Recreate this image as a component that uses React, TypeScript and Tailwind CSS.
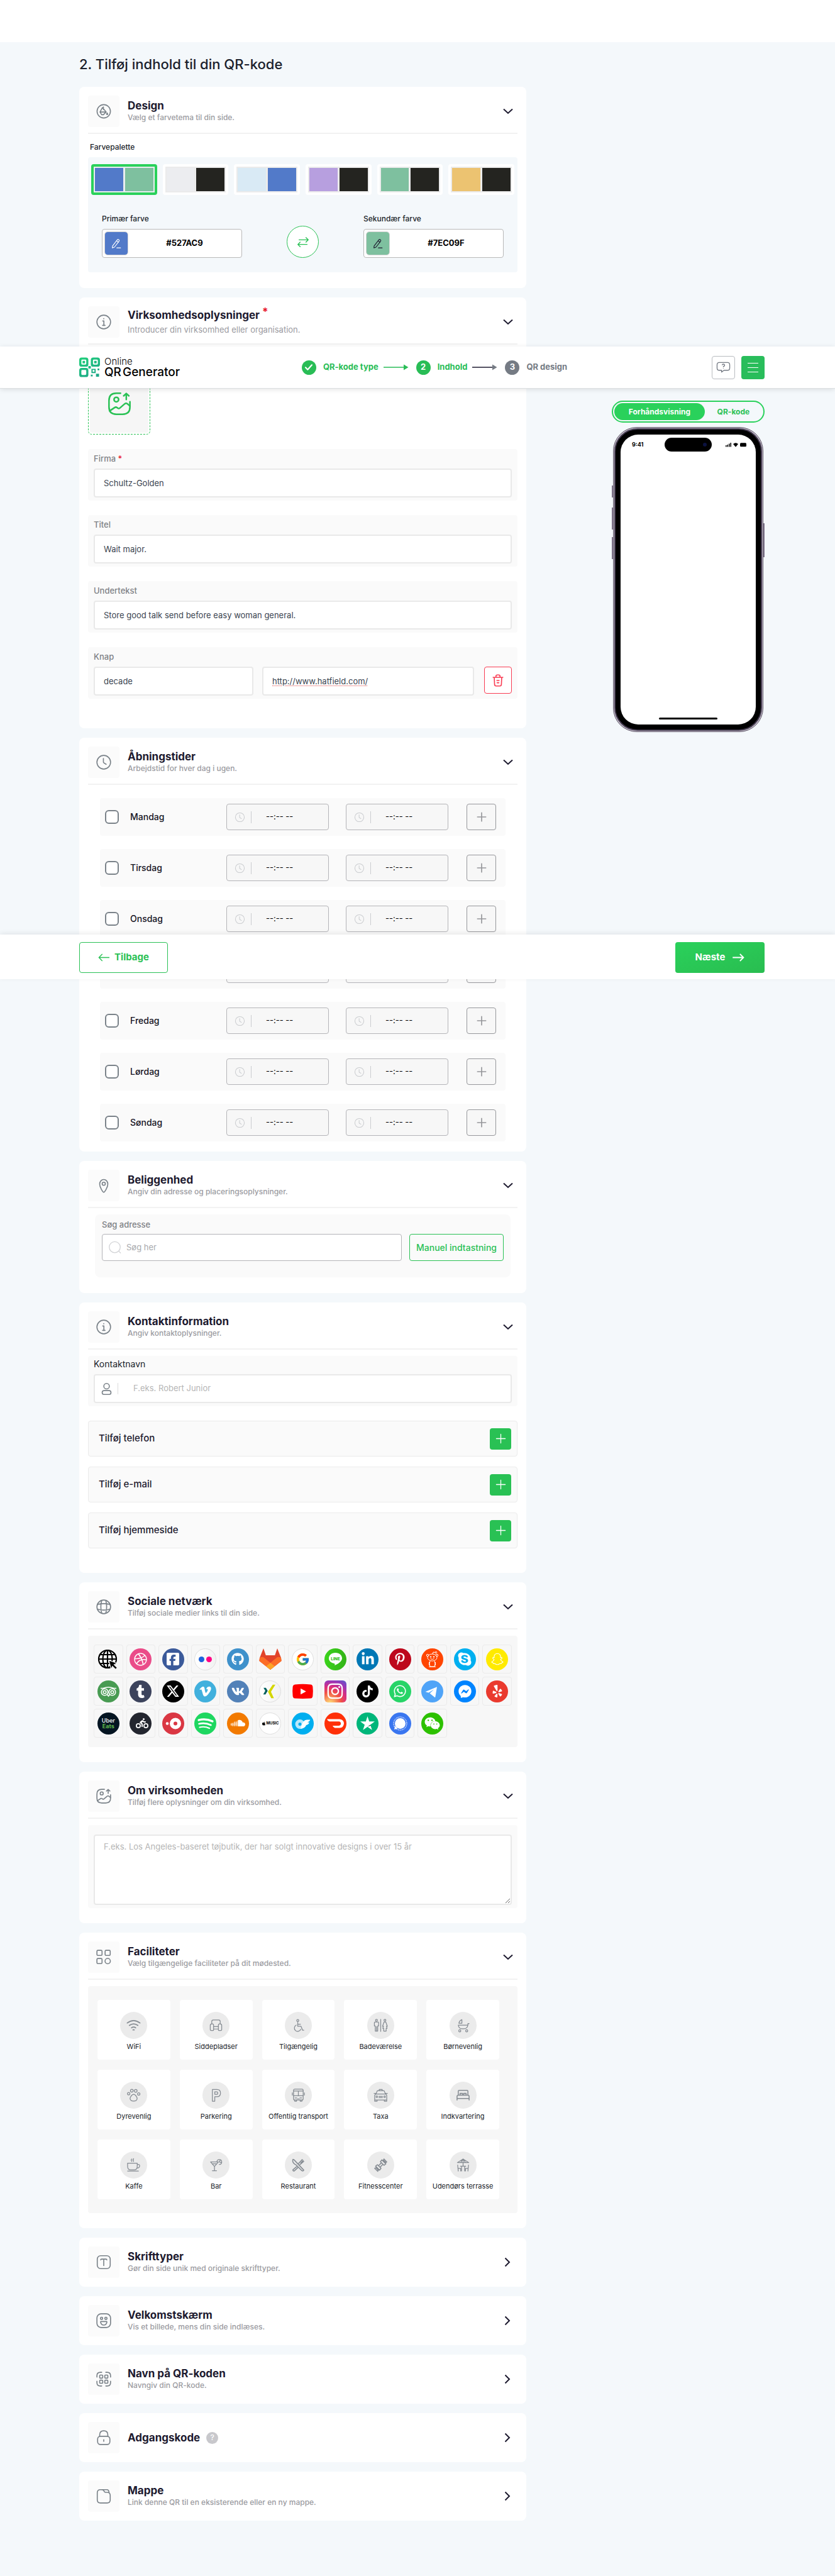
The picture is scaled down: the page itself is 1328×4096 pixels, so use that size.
import React from "react";
import {
  FaApple,
  FaDribbble,
  FaFacebookF,
  FaFacebookMessenger,
  FaGithub,
  FaInstagram,
  FaLinkedinIn,
  FaPersonBiking,
  FaPinterestP,
  FaSkype,
  FaSnapchat,
  FaSoundcloud,
  FaTiktok,
  FaTumblr,
  FaVimeoV,
  FaWeixin,
  FaWhatsapp,
  FaXTwitter,
  FaYelp,
} from "react-icons/fa6";
import { FaVk } from "react-icons/fa";
import { FcGoogle } from "react-icons/fc";

type Kids = { children?: React.ReactNode };

/* ---------- small drawing helpers ---------- */

function Line({ children, className = "h-[26px] w-[26px]", width = 1.5 }: Kids & { className?: string; width?: number }) {
  return (
    <svg
      viewBox="0 0 24 24"
      className={className}
      fill="none"
      stroke="currentColor"
      strokeWidth={width}
      strokeLinecap="round"
      strokeLinejoin="round"
      aria-hidden="true"
    >
      {children}
    </svg>
  );
}

const imageUp = (
  <>
    <path d="M13 2H9Q2 2 2 9v6q0 7 7 7h6q7 0 7-7v-5" />
    <circle cx="9" cy="8" r="2.2" />
    <path d="M18.5 8V2.2M16 4.5l2.5-2.3L21 4.5" />
    <path d="M2.6 18.8l5-3.3q1-.6 2 .1l.8.6q1 .7 1.900-.1l4.700-4q1.300-1.100 2.600 0l2.200 1.900" />
  </>
);

const icons = {
  paint: (
    <>
      <circle cx="12" cy="12" r="9.800" />
      <path d="M10 6.500l5.500 6.500-4 4h-2.500l-2.500-4z M7 13h8.500M11.500 5.500v4" />
      <path d="M17 14.500c-2.500 3 2.500 3 0 0" fill="currentColor" />
    </>
  ),
  info: (
    <>
      <circle cx="12" cy="12" r="10" />
      <path d="M10.500 10.500h1.700v6.500M10.300 17h3.600M12 7v.3" />
    </>
  ),
  clock: (
    <>
      <circle cx="12" cy="12" r="10" />
      <path d="M11.500 6.500v5q0 1 .8 1.500l3.200 2" />
    </>
  ),
  pin: (
    <>
      <path d="M12 22c-1 0-6-7-6-12a6 6.800 0 0 1 12 0c0 5-5 12-6 12z" />
      <circle cx="12" cy="9.500" r="2.300" />
    </>
  ),
  globe: (
    <>
      <circle cx="12" cy="12" r="10" />
      <path d="M9 2.500q-2.500 9.500 0 19M15 2.500q2.500 9.500 0 19M2.500 8.500q9.500-2.500 19 0M2.500 15.500q9.500 2.500 19 0" />
    </>
  ),
  imageUp,
  grid: (
    <>
      <rect x="2" y="2" width="7.500" height="7.500" rx="1.500" />
      <rect x="14" y="2" width="7.500" height="7.500" rx="1.500" />
      <rect x="2" y="14" width="7.500" height="7.500" rx="1.500" />
      <circle cx="17.800" cy="17.800" r="3.900" />
    </>
  ),
  type: (
    <>
      <rect x="2.500" y="2.500" width="19" height="19" rx="5" />
      <path d="M7.500 8.800q0-1.300 1.300-1.300h6.400q1.300 0 1.300 1.300M12 7.500v9.500" />
    </>
  ),
  smile: (
    <>
      <rect x="2" y="2" width="20" height="20" rx="6" />
      <circle cx="8.800" cy="8.500" r="1.600" />
      <circle cx="15.200" cy="8.500" r="1.600" />
      <path d="M8 13.300h8q.6 0 .6.600a4.600 4.600 0 0 1-9.200 0q0-.6.600-.6z" />
    </>
  ),
  qr: (
    <>
      <path d="M2 9V7q0-5 5-5h2M15 2h2q5 0 5 5v2M22 15v2q0 5-5 5h-2M9 22H7q-5 0-5-5v-2" />
      <rect x="6" y="6" width="4.500" height="4.500" rx="1" />
      <rect x="13.500" y="6" width="4.500" height="4.500" rx="1" />
      <rect x="6" y="13.500" width="4.500" height="4.500" rx="1" />
      <rect x="13.500" y="13.500" width="4.500" height="4.500" rx="1" />
    </>
  ),
  lock: (
    <>
      <path d="M6 10V8q0-6 6-6t6 6v2" />
      <rect x="3" y="10" width="18" height="12" rx="4" />
      <path d="M12 15v2.500" />
    </>
  ),
  folder: (
    <>
      <path d="M2.500 17V7q0-4.500 4.500-4.500h2.500q1.500 0 2.200 1l1.300 2q.7 1 2 1h2q4.500 0 4.500 4.500v6.500q0 4.500-4.500 4.500H7q-4.500 0-4.500-4.500z" />
      <path d="M9.500 2.500h7q3 0 3.300 4.300" />
    </>
  ),
};

type IconName = keyof typeof icons;

/* ---------- cards ---------- */

function Card({
  icon,
  title,
  sub,
  required,
  help,
  closed,
  children,
}: Kids & { icon: IconName; title: string; sub?: string; required?: boolean; help?: boolean; closed?: boolean }) {
  return (
    <section className="rounded-lg bg-white px-[14px]">
      <div className={closed ? "flex items-center py-[14px]" : "flex items-center border-b-2 border-[#f2f2f2] pb-[9px] pt-[14px]"}>
        <span className="flex h-[50px] w-[50px] items-center justify-center rounded bg-[#fbfbfb] text-[#7a8289]">
          <Line>{icons[icon]}</Line>
        </span>
        <div className="ml-[13px] flex-1">
          <h2 className="flex items-center text-[17px] font-bold leading-[20px] text-[#1d1a2f]">
            {title}
            {required && <span className="ml-1 self-start text-[17px] leading-[10px] text-[#e8192c]">*</span>}
            {help && (
              <span className="ml-[10px] flex h-[19px] w-[19px] items-center justify-center rounded-full bg-[#c8c8cc] text-xs font-medium text-white">
                ?
              </span>
            )}
          </h2>
          {sub && (
            <p className={required ? "pt-1 text-[13px] font-normal leading-[18px] text-[#9b9ba1]" : "text-xs font-medium leading-[18px] text-[#9b9ba1]"}>
              {sub}
            </p>
          )}
        </div>
        <button type="button" aria-label={title} className={closed ? "mr-[7px] p-1 text-[#1d1a2f]" : "mr-[3px] p-1 text-[#1d1a2f]"}>
          {closed ? (
            <svg viewBox="0 0 10 16" className="h-4 w-[10px]" fill="none" stroke="currentColor" strokeWidth="2">
              <path d="M1.500 1.500L8 8l-6.500 6.500" />
            </svg>
          ) : (
            <svg viewBox="0 0 16 10" className="h-[10px] w-4" fill="none" stroke="currentColor" strokeWidth="2">
              <path d="M1 1.500L8 8l7-6.500" />
            </svg>
          )}
        </button>
      </div>
      {children}
    </section>
  );
}

const inputBox =
  "h-[46px] w-full min-w-0 rounded border-2 border-[#e9e9e9] bg-white px-[14px] text-[13px] text-[#3b4450] outline-none placeholder:text-[#b5b5b5]";
const panel = "rounded bg-[#fafafa] px-[9px]";

/* ---------- design ---------- */

const palettes = [
  ["bg-[#527ac9]", "bg-[#7ec09f]"],
  ["bg-[#ecedf0]", "bg-[#242420]"],
  ["bg-[#d9eaf5]", "bg-[#527ac9]"],
  ["bg-[#b79fdf]", "bg-[#242420]"],
  ["bg-[#7ec09f]", "bg-[#242420]"],
  ["bg-[#ecc371]", "bg-[#242420]"],
];

function ColorField({ id, label, value, tile }: { id: string; label: string; value: string; tile: string }) {
  return (
    <div className="w-[223px]">
      <label htmlFor={id} className="block text-xs font-medium leading-5 text-[#20242a]">
        {label}
      </label>
      <div className="mt-[6px] flex h-[46px] items-center rounded border border-[#b9b9b9] bg-white pl-1">
        <span className={tile}>
          <Line className="h-[18px] w-[18px]" width={1.5}>
            <path d="M4 17.500L14 4.500q1.500-1.800 3.300-.4t.4 3.400L8 20l-4.500 1.500zM12.500 6.500l4 3.200M13 21.500h8" />
          </Line>
        </span>
        <input id={id} defaultValue={value} className="w-full min-w-0 bg-transparent text-center text-[13px] font-bold text-black outline-none" />
      </div>
    </div>
  );
}

function DesignCard() {
  return (
    <Card icon="paint" title="Design" sub="Vælg et farvetema til din side.">
      <p className="mb-[6px] mt-[11px] px-[3px] text-xs font-medium leading-5 text-[#20242a]">Farvepalette</p>
      <div className="mb-[25px] rounded bg-[#f4f8fb] px-[5px] pb-[23px] pt-[11px]">
        <div className="grid grid-cols-6 gap-[9px]">
          {palettes.map(([a, b], i) => (
            <button
              key={i}
              type="button"
              aria-label={"Farvepalette " + (i + 1)}
              className={
                i === 0
                  ? "flex h-[49px] rounded border-[4px] border-[#2ad15b] bg-[#e9edef] p-px"
                  : "flex h-[49px] rounded border-[4px] border-white bg-[#ebebeb] p-px"
              }
            >
              <span className="grid h-full w-full grid-cols-2 gap-[3px] p-px">
                <span className={a} />
                <span className={b} />
              </span>
            </button>
          ))}
        </div>
        <div className="mt-7 flex items-end justify-between px-[17px]">
          <ColorField
            id="primary"
            label="Primær farve"
            value="#527AC9"
            tile="flex h-9 w-9 shrink-0 items-center justify-center rounded-sm bg-[#527ac9] text-white outline outline-1 outline-[#d5d5d5]"
          />
          <button
            type="button"
            aria-label="Byt farver"
            className="flex h-[51px] w-[51px] items-center justify-center rounded-full border border-[#2ac155] bg-white text-[#2ac155]"
          >
            <Line className="h-[22px] w-[22px]">
              <path d="M5 8h16M17 4l4 4-4 4M19 16H3M7 12l-4 4 4 4" />
            </Line>
          </button>
          <ColorField
            id="secondary"
            label="Sekundær farve"
            value="#7EC09F"
            tile="flex h-9 w-9 shrink-0 items-center justify-center rounded-sm bg-[#7ec09f] text-[#1d1a2f] outline outline-1 outline-[#d5d5d5]"
          />
        </div>
      </div>
    </Card>
  );
}

/* ---------- company ---------- */

function Field({ id, label, value, required }: { id: string; label: string; value: string; required?: boolean }) {
  return (
    <div className={panel + " pb-[5px] pt-[5px]"}>
      <label htmlFor={id} className="block text-[13px] font-medium leading-5 text-[#7f8286]">
        {label} {required && <span className="text-[#e8192c]">*</span>}
      </label>
      <input id={id} defaultValue={value} className={"mt-[6px] " + inputBox} />
    </div>
  );
}

function CompanyCard() {
  return (
    <Card icon="info" title="Virksomhedsoplysninger" sub="Introducer din virksomhed eller organisation." required>
      <button
        type="button"
        aria-label="Upload billede"
        className="mb-[23px] mt-11 flex h-[99px] w-[99px] rounded-md border border-dashed border-[#2ac155] p-[2px]"
      >
        <span className="flex h-full w-full items-center justify-center rounded bg-[#f6f6f6] text-[#2ac155]">
          <Line className="h-10 w-10" width={1.5}>
            {imageUp}
          </Line>
        </span>
      </button>
      <div className="flex flex-col gap-[23px] pb-[47px]">
        <Field id="firm" label="Firma" value="Schultz-Golden" required />
        <Field id="titel" label="Titel" value="Wait major." />
        <Field id="under" label="Undertekst" value="Store good talk send before easy woman general." />
        <div className={panel + " pb-[5px] pt-[5px]"}>
          <label htmlFor="knap" className="block text-[13px] font-medium leading-5 text-[#7f8286]">
            Knap
          </label>
          <div className="mt-[6px] flex">
            <div className="w-[254px]">
              <input id="knap" defaultValue="decade" className={inputBox} />
            </div>
            <div className="ml-[14px] mr-4 flex-1">
              <input
                aria-label="Link"
                defaultValue="http://www.hatfield.com/"
                className={inputBox + " underline decoration-[#e04a4a] decoration-dotted decoration-1 underline-offset-2"}
              />
            </div>
            <button
              type="button"
              aria-label="Slet"
              className="flex h-[43px] w-[44px] items-center justify-center rounded border border-[#f93b52] bg-white text-[#f93b52]"
            >
              <Line className="h-[22px] w-[22px]" width={1.800}>
                <path d="M3.500 6.500h17M8.500 6V4.500q0-2 2-2h3q2 0 2 2V6M5.500 6.500l.6 12.500q.2 2.500 2.500 2.500h6.800q2.300 0 2.500-2.500l.6-12.500M10 12h4M10.500 16h3" />
              </Line>
            </button>
          </div>
        </div>
      </div>
    </Card>
  );
}

/* ---------- opening hours ---------- */

const days = ["Mandag", "Tirsdag", "Onsdag", "Torsdag", "Fredag", "Lørdag", "Søndag"];

function TimeBox({ label }: { label: string }) {
  return (
    <div className="flex h-[42px] w-[163px] items-center rounded border border-[#b4b4b8] bg-[#f7f7f7] pl-3 text-[#cbcdd0]">
      <Line className="h-[17px] w-[17px]">{icons.clock}</Line>
      <span className="ml-[9px] h-[19px] w-px bg-[#cbcdd0]" />
      <input
        aria-label={label}
        defaultValue="--:-- --"
        className="ml-[23px] w-20 bg-transparent text-[13px] text-black outline-none"
      />
    </div>
  );
}

function HoursCard() {
  return (
    <Card icon="clock" title="Åbningstider" sub="Arbejdstid for hver dag i ugen.">
      <ul className="mx-[19px] flex flex-col gap-[21px] pb-4 pt-[21px]">
        {days.map((d) => (
          <li key={d} className="flex h-[60px] items-center rounded bg-[#fafafa] pl-2 pr-[15px]">
            <label className="flex flex-1 items-center text-sm font-medium text-[#15131f]">
              <input type="checkbox" className="mr-[18px] h-[22px] w-[22px] appearance-none rounded-md border-2 border-[#7a8289] bg-white" />
              {d}
            </label>
            <TimeBox label={d + " fra"} />
            <span className="w-[27px]" />
            <TimeBox label={d + " til"} />
            <button
              type="button"
              aria-label={"Tilføj tid " + d}
              className="ml-[29px] flex h-[42px] w-[47px] items-center justify-center rounded border border-[#96979b] bg-[#f7f7f7] text-[#96979b]"
            >
              <Line className="h-4 w-4" width={2.500}>
                <path d="M12 2v20M2 12h20" />
              </Line>
            </button>
          </li>
        ))}
      </ul>
    </Card>
  );
}

/* ---------- location and contact ---------- */

function LocationCard() {
  return (
    <Card icon="pin" title="Beliggenhed" sub="Angiv din adresse og placeringsoplysninger.">
      <div className="mx-[11px] mb-[25px] mt-[10px] rounded-lg bg-[#fafafa] px-[11px] pb-[26px] pt-[6px]">
        <label htmlFor="addr" className="block text-[13px] font-medium leading-5 text-[#7f8286]">
          Søg adresse
        </label>
        <div className="mt-[5px] flex gap-3">
          <div className="flex h-[43px] flex-1 items-center rounded border border-[#b4b4b8] bg-white pl-[9px] text-[#d2d3d6]">
            <Line className="h-[21px] w-[21px] shrink-0">
              <circle cx="12" cy="11.500" r="10" />
              <path d="M19.500 19l3 3" />
            </Line>
            <input id="addr" placeholder="Søg her" className="ml-2 w-full min-w-0 bg-transparent text-[13px] outline-none placeholder:text-[#a8a9ad]" />
          </div>
          <button type="button" className="h-[43px] w-[150px] whitespace-nowrap rounded border border-[#2ac155] text-sm font-medium text-[#2ac155]">
            Manuel indtastning
          </button>
        </div>
      </div>
    </Card>
  );
}

function ContactCard() {
  return (
    <Card icon="info" title="Kontaktinformation" sub="Angiv kontaktoplysninger.">
      <div className={panel + " mt-[10px] pb-[5px] pt-[3px]"}>
        <label htmlFor="contact" className="block text-sm leading-5 text-[#20242a]">
          Kontaktnavn
        </label>
        <div className="mt-[6px] flex h-[46px] items-center rounded border-2 border-[#e9e9e9] bg-white pl-2 text-[#7a8289]">
          <Line className="h-[21px] w-[21px] shrink-0" width={1.800}>
            <ellipse cx="12" cy="7" rx="5" ry="5" />
            <rect x="4" y="15" width="16" height="7" rx="3.500" />
          </Line>
          <span className="ml-[7px] h-[18px] w-px shrink-0 bg-[#dcdcdc]" />
          <input id="contact" placeholder="F.eks. Robert Junior" className="ml-6 w-full min-w-0 bg-transparent text-[13px] outline-none placeholder:text-[#b5b5b5]" />
        </div>
      </div>
      <div className="mt-[23px] flex flex-col gap-4 pb-[39px]">
        {["Tilføj telefon", "Tilføj e-mail", "Tilføj hjemmeside"].map((t) => (
          <div
            key={t}
            className="flex h-[57px] items-center justify-between rounded-sm border border-[#ebebeb] bg-[#fafafa] pl-4 pr-[9px] text-[15px] font-medium text-[#1d1a2f]"
          >
            {t}
            <button type="button" aria-label={t} className="flex h-[34px] w-[34px] items-center justify-center rounded-sm bg-[#29c154] text-white">
              <Line className="h-[17px] w-[17px]" width={1.800}>
                <path d="M12 2v20M2 12h20" />
              </Line>
            </button>
          </div>
        ))}
      </div>
    </Card>
  );
}

/* ---------- social ---------- */

function Disc({ bg, children }: Kids & { bg: string }) {
  return <span className={"flex h-[35px] w-[35px] items-center justify-center overflow-hidden rounded-full text-white " + bg}>{children}</span>;
}

const ring = "border border-[#dedede] bg-gradient-to-r from-white to-[#f2f2f2]";

const socials: [string, React.ReactNode][] = [
  [
    "Web",
    <svg viewBox="0 0 36 36" className="h-9 w-9">
      <g fill="none" stroke="#000" strokeWidth="2.200">
        <circle cx="17" cy="18" r="14" />
        <ellipse cx="17" cy="18" rx="7.500" ry="14" />
        <path d="M17 4v28M3 18h28M5 11h24M5 25h24" />
      </g>
      <path d="M19 20l13 4.500-4.500 2.300 5 5-2.700 2.700-5-5-2 5z" stroke="#f7f7f7" strokeWidth="1.200" />
    </svg>,
  ],
  ["Dribbble", <Disc bg="bg-[#ea4c89]"><FaDribbble size={21} /></Disc>],
  [
    "Facebook",
    <Disc bg="bg-[#3b5a9a]">
      <span className="flex h-5 w-5 items-end justify-end rounded-[2px] bg-white pr-[2px] text-[#3b5a9a]">
        <FaFacebookF size={17} />
      </span>
    </Disc>,
  ],
  [
    "Flickr",
    <Disc bg={ring}>
      <span className="mr-[3px] h-[9px] w-[9px] rounded-full bg-[#1c63dc]" />
      <span className="h-[9px] w-[9px] rounded-full bg-[#ff0084]" />
    </Disc>,
  ],
  ["GitHub", <Disc bg="bg-[#3f91cb]"><FaGithub size={20} /></Disc>],
  [
    "GitLab",
    <svg viewBox="0 0 36 36" className="h-9 w-9">
      <path d="M7 1L1 16l-.6 5L18 35 35.600 21l-.6-5L29 1l-3.800 11H10.800z" fill="#e24329" />
      <path d="M1 16q3-2 6-1l11 9 11-9q3-1 6 1l.6 5L18 35 .4 21z" fill="#fc6d26" />
      <path d="M18 24l7 5.500L18 35l-7-5.500z" fill="#fca326" />
    </svg>,
  ],
  ["Google", <Disc bg="border border-[#dedede] bg-white"><FcGoogle size={23} /></Disc>],
  [
    "LINE",
    <Disc bg="bg-gradient-to-r from-[#3bd41c] to-[#33b317]">
      <svg viewBox="0 0 35 35" className="h-full w-full">
        <path d="M17.500 7C11 7 7 11 7 16c0 4 3.500 7 8.500 8 1.500.3 1 1.500.8 3 4-1.600 11.700-6 11.700-11 0-5-4-9-10.500-9z" fill="#fff" />
        <text x="17.500" y="18.500" textAnchor="middle" fontSize="6.500" fontWeight="800" fill="#35be19">LINE</text>
      </svg>
    </Disc>,
  ],
  ["LinkedIn", <Disc bg="bg-[#0077b5]"><FaLinkedinIn size={22} /></Disc>],
  ["Pinterest", <Disc bg="bg-[#bd081c]"><FaPinterestP size={20} /></Disc>],
  [
    "Reddit",
    <Disc bg="bg-[#ff4500]">
      <svg viewBox="0 0 35 35" className="h-full w-full" fill="none" stroke="#fff">
        <ellipse cx="17.500" cy="14.500" rx="7.500" ry="5.500" />
        <circle cx="10" cy="11" r="1.700" />
        <circle cx="25" cy="11" r="1.700" />
        <circle cx="23.500" cy="6.500" r="1.300" />
        <path d="M18 9l1-3 3.500.5M14.500 16.500q3 2 6 0M14 20q-2 5 0 9h7q2-4 0-9M12.500 22v5M22.500 22v5M12 29.300h11" />
        <circle cx="15" cy="13.500" r=".8" fill="#fff" />
        <circle cx="20" cy="13.500" r=".8" fill="#fff" />
      </svg>
    </Disc>,
  ],
  ["Skype", <Disc bg="bg-[#00aff0]"><FaSkype size={24} /></Disc>],
  ["Snapchat", <Disc bg="bg-[#ffea00]"><FaSnapchat size={20} /></Disc>],
  [
    "Tripadvisor",
    <Disc bg="bg-[#489b52]">
      <svg viewBox="0 0 35 35" className="h-full w-full" fill="none" stroke="#fff" strokeWidth="1.600">
        <circle cx="11.500" cy="18.500" r="5.300" />
        <circle cx="23.500" cy="18.500" r="5.300" />
        <circle cx="11.500" cy="18.500" r="2.300" />
        <circle cx="23.500" cy="18.500" r="2.300" />
        <path d="M5 12.500h4q8.500-3.500 17 0h4M15.500 22.500l2 2.500 2-2.500" />
      </svg>
    </Disc>,
  ],
  ["Tumblr", <Disc bg="bg-[#3c435c]"><FaTumblr size={21} /></Disc>],
  ["X", <Disc bg="bg-black"><FaXTwitter size={22} /></Disc>],
  ["Vimeo", <Disc bg="bg-[#41b0dd]"><FaVimeoV size={21} /></Disc>],
  ["VK", <Disc bg="bg-[#5281b8]"><FaVk size={21} /></Disc>],
  [
    "Xing",
    <Disc bg={ring}>
      <svg viewBox="0 0 35 35" className="h-full w-full">
        <path d="M6.500 11.500h4l3 5-3.700 6H6l3.500-6z" fill="#00605e" />
        <path d="M22 6h4.500l-7.500 12 5 11h-4.500L14 18z" fill="#d4d600" />
      </svg>
    </Disc>,
  ],
  [
    "YouTube",
    <svg viewBox="0 0 36 26" className="h-[25px] w-[35px]">
      <path d="M5 1.500Q18 0 31 1.500q3 .3 3.500 3.500 1 8 0 16-.5 3-3.500 3.500-13 1-26 0Q2 24 1.500 21q-1-8 0-16Q2 2 5 1.500z" fill="#f00" />
      <path d="M14.500 8v10l9-5z" fill="#fff" />
    </svg>,
  ],
  [
    "Instagram",
    <span className="flex h-[35px] w-[35px] items-center justify-center rounded-md bg-[radial-gradient(circle_at_25%_105%,#fed373_5%,#f15245_40%,#d92e7f_60%,#9b36b7_78%,#515ecf_100%)] text-white">
      <FaInstagram size={28} />
    </span>,
  ],
  ["TikTok", <Disc bg="bg-black"><FaTiktok size={19} /></Disc>],
  ["WhatsApp", <Disc bg="bg-[#27d467]"><FaWhatsapp size={22} /></Disc>],
  [
    "Telegram",
    <Disc bg="bg-[#50a4f8]">
      <svg viewBox="0 0 35 35" className="h-full w-full" fill="#fff">
        <path d="M6.500 18L25 10.200l-2.700 16.300q-.3.800-1 .3L13.500 20.500l6.800-6.200-8.600 5.300z" />
      </svg>
    </Disc>,
  ],
  ["Messenger", <Disc bg="bg-[#0084ff]"><FaFacebookMessenger size={21} /></Disc>],
  ["Yelp", <Disc bg="bg-[#ea3a2e]"><FaYelp size={20} /></Disc>],
  [
    "Uber Eats",
    <Disc bg="flex-col bg-[#051522] text-[9px] leading-[9px]">
      <span className="font-medium">Uber</span>
      <span className="font-bold text-[#5fb94b]">Eats</span>
    </Disc>,
  ],
  [
    "Postmates",
    <Disc bg="bg-[#23262f] pl-1">
      <FaPersonBiking size={20} />
    </Disc>,
  ],
  [
    "OpenTable",
    <Disc bg="bg-[#da3743]">
      <svg viewBox="0 0 35 35" className="h-full w-full" fill="#fff">
        <circle cx="8" cy="17.500" r="2.300" />
        <path fillRule="evenodd" d="M21 8.500a9 9 0 1 0 0 18 9 9 0 0 0 0-18zm0 6a3 3 0 1 1 0 6 3 3 0 0 1 0-6z" />
      </svg>
    </Disc>,
  ],
  [
    "Spotify",
    <Disc bg="bg-[#1ed760]">
      <svg viewBox="0 0 35 35" className="h-full w-full" fill="none" stroke="#fff" strokeLinecap="round">
        <path d="M7 12q11-3.200 22 2" strokeWidth="3.200" />
        <path d="M7.500 18q10-2.500 19 2" strokeWidth="2.600" />
        <path d="M8.500 23.500q8-2 15.500 1.500" strokeWidth="2.200" />
      </svg>
    </Disc>,
  ],
  ["SoundCloud", <Disc bg="bg-[#f27a00]"><FaSoundcloud size={23} /></Disc>],
  [
    "Apple Music",
    <Disc bg="border border-[#dedede] bg-white">
      <span className="flex items-center text-[6px] font-bold leading-none text-black">
        <FaApple size={7} />
        MUSIC
      </span>
    </Disc>,
  ],
  [
    "OnlyFans",
    <Disc bg="bg-[#00aeef]">
      <svg viewBox="0 0 35 35" className="h-full w-full">
        <path fillRule="evenodd" d="M13 11a7.500 7.500 0 1 0 0 15 7.500 7.500 0 0 0 0-15zm0 5a2.500 2.500 0 1 1 0 5 2.500 2.500 0 0 1 0-5z" fill="#b8e7fb" />
        <path d="M14 26q2-8 4.500-11.500T25 11.500h4.500q-1 3-4.500 4l3 .5q-1.500 3.500-5 4-1.500 5-9 6z" fill="#fff" />
      </svg>
    </Disc>,
  ],
  [
    "DoorDash",
    <Disc bg="bg-[#ff3008]">
      <svg viewBox="0 0 35 35" className="h-full w-full" fill="#fff">
        <path d="M4 10.500h20q6.500.5 7 7-.5 6.500-7 7h-7.500q-2.500-1-3.500-3.500h10q3-.5 3.200-3.500-.2-2.800-3.200-3.200H8q-3-1-4-3.800z" />
      </svg>
    </Disc>,
  ],
  [
    "Trustpilot",
    <Disc bg="bg-[#00b67a]">
      <svg viewBox="0 0 35 35" className="h-full w-full">
        <path d="M17.500 6l2.700 8.300H29l-7 5.200 2.700 8.300-7.200-5.100-7.200 5.100 2.700-8.300-7-5.200h8.800z" fill="#fff" />
        <path d="M17.500 22.500l5-1.500-.5-1.500z" fill="#005128" />
      </svg>
    </Disc>,
  ],
  [
    "Signal",
    <Disc bg="bg-[#3a76f0]">
      <svg viewBox="0 0 35 35" className="h-full w-full">
        <circle cx="17.500" cy="17.500" r="8.500" fill="#fff" />
        <path d="M8 27l1.300-5.500 4 4z" fill="#fff" />
        <circle cx="17.500" cy="17.500" r="10.500" fill="none" stroke="#fff" strokeDasharray="2.200 .8" />
      </svg>
    </Disc>,
  ],
  ["WeChat", <Disc bg="bg-[#2dc100]"><FaWeixin size={25} /></Disc>],
];

function SocialCard() {
  return (
    <Card icon="globe" title="Sociale netværk" sub="Tilføj sociale medier links til din side.">
      <div className="pb-6 pt-[10px]">
        <div className="grid grid-cols-[repeat(13,minmax(0,1fr))] gap-[5px] rounded bg-[#f7f7f7] px-[9px] pb-[15px] pt-[14px]">
          {socials.map(([name, mark]) => (
            <button
              key={name}
              type="button"
              aria-label={name}
              className="flex h-[46px] items-center justify-center rounded border border-[#ebebeb]"
            >
              {mark}
            </button>
          ))}
        </div>
      </div>
    </Card>
  );
}

/* ---------- about ---------- */

function AboutCard() {
  return (
    <Card icon="imageUp" title="Om virksomheden" sub="Tilføj flere oplysninger om din virksomhed.">
      <div className="pb-6 pt-[10px]">
        <div className={panel + " pb-[5px] pt-[15px]"}>
          <textarea
            aria-label="Om virksomheden"
            placeholder="F.eks. Los Angeles-baseret tøjbutik, der har solgt innovative designs i over 15 år"
            className="block h-[112px] w-full resize rounded border-2 border-[#e9e9e9] bg-white px-[14px] py-[7px] text-[13px] leading-5 outline-none placeholder:text-[#b5b5b5]"
          />
        </div>
      </div>
    </Card>
  );
}

/* ---------- facilities ---------- */

const facilities: [string, React.ReactNode][] = [
  ["WiFi", <path d="M1.500 8q10.500-8 21 0M5 12q7-5 14 0M8.500 16q3.500-2.500 7 0M11 19.500q1-.7 2 0" strokeWidth="1.800" />],
  [
    "Siddepladser",
    <path d="M5 9V5.500Q5 3 7.500 3h9Q19 3 19 5.500V9M8 14v-2.500Q8 9.500 6 9.500H5q-2.500 0-2.500 2.500v7q0 1.500 1.500 1.500h3q1 0 1-1V14h8v5.500q0 1 1 1h3q1.500 0 1.500-1.500v-7q0-2.500-2.500-2.500h-1q-2 0-2 2V14M8 18h8" />,
  ],
  [
    "Tilgængelig",
    <>
      <circle cx="11" cy="4" r="1.700" />
      <path d="M11 7v6.500h5.500l2.500 6.500h2M11 10h4.500M8.500 11.500A5.500 5.500 0 1 0 16 18.500" />
    </>,
  ],
  [
    "Badeværelse",
    <>
      <path d="M12 2v20" />
      <circle cx="5" cy="3.500" r="1.600" />
      <circle cx="19" cy="3.500" r="1.600" />
      <path d="M2.500 6.500h5q1 0 1 1V13H7v8.500H3V13H1.500V7.500q0-1 1-1zM5 14v7.500M17.500 6.500h3l2.500 7h-1.500l1 3.500h-1.500v4.500h-4V17h-1.500l1-3.500H15z" />
    </>,
  ],
  [
    "Børnevenlig",
    <>
      <path d="M5 8.500h5V2.500Q6 4 5 8.500zM4 11.500h16q-1 6-6.500 6H10q-5 0-6-6zM20 11.500V9h2" />
      <circle cx="6.500" cy="21" r="1.700" />
      <circle cx="18" cy="21" r="1.700" />
    </>,
  ],
  [
    "Dyrevenlig",
    <>
      <circle cx="3.800" cy="9.500" r="2" />
      <circle cx="9" cy="4.500" r="2.300" />
      <circle cx="15.500" cy="4.800" r="2.300" />
      <circle cx="20.500" cy="10" r="2" />
      <path d="M12 10.500q2.500 0 4.500 3.500 3 4-.5 7-4 1.500-8 0-3.500-3-.5-7 2-3.500 4.500-3.500z" />
    </>,
  ],
  ["Parkering", <path d="M6 2.500h7.500q6 0 6 6t-6 6H10V22H6zM10 6.500v4h3q2 0 2-2t-2-2z" />],
  [
    "Offentlig transport",
    <>
      <rect x="4" y="2" width="16" height="18" rx="2" />
      <path d="M4 5h16M4 13h16M12 5v8M2 8v4M22 8v4M6 20v2h3v-2M15 20v2h3v-2M6.500 16.500h3M14.500 16.500h3M10.500 18h3" />
    </>,
  ],
  [
    "Taxa",
    <>
      <path d="M4 10l2.500-5.500h11L20 10M9.500 4.500V2.500h5v2M2 20V13q0-3 3-3h14q3 0 3 3v7zM2 20v2h4v-2M18 20v2h4v-2M1 9h3M20 9h3M9 16h6M9 14h6" />
      <circle cx="5.500" cy="14.500" r="1.300" />
      <circle cx="18.500" cy="14.500" r="1.300" />
    </>,
  ],
  [
    "Indkvartering",
    <path d="M4 12V5.500Q4 4 5.500 4h13Q20 4 20 5.500V12M2 20v-6q0-2 2-2h16q2 0 2 2v6M2 17.500h20M7 12V9h4v3M13 12V9h4v3" strokeWidth="1.600" />,
  ],
  [
    "Kaffe",
    <path d="M2 9h16v5q0 6-5 6H7q-5 0-5-6zM18 11h2.500q1.500 0 1.500 2 0 4-4.500 4M2 22h18M9 2q-2 1.500 0 4M12 1.500q-2 2 0 4.500" />,
  ],
  [
    "Bar",
    <path d="M3 7h13l-6.500 7.500zM9.500 14.500V21M6 21.500h7M6.500 10h6M13.500 7q0-4 4-4t4 4-4 4M17.500 7l1.500-3M17.500 7l3 1" />,
  ],
  [
    "Restaurant",
    <path d="M3 2.500q-1.500 5 3 8l3 2 9 9q2 1 3-1L5 3.500q-1-1-2-1zM14 12l7-6M12 10l6.500-7M16 9l4-4.500M10 14l-7 6q0 2 2 2l7-6.500" strokeWidth="1.600" />,
  ],
  [
    "Fitnesscenter",
    <path d="M9 12.500l3.500-3.500M11.500 15l3.500-3.500M3.500 14l3-2.500 6 6-2.500 3zM2 17.500l2-1 4 4-1 2zM14 3.500l-2.500 3 6 6 3-2.500zM17.500 2l-1 2 4 4 1.500-1z" strokeWidth="1.600" />,
  ],
  [
    "Udendørs terrasse",
    <path d="M12 2L2.500 8h19zM12 2v12M8 8l4-6 4 6M7.500 14h9M9.500 14v8M14.500 14v8M3 12l1 10M21 12l-1 10M4 17.500h4V22M20 17.500h-4V22" />,
  ],
];

function FacilitiesCard() {
  return (
    <Card icon="grid" title="Faciliteter" sub="Vælg tilgængelige faciliteter på dit mødested.">
      <div className="pb-6 pt-[10px]">
        <div className="grid grid-cols-5 gap-x-[15px] gap-y-4 rounded bg-[#f7f7f7] py-[22px] pl-[15px] pr-[29px]">
          {facilities.map(([name, mark]) => (
            <button key={name} type="button" className="flex h-[95px] flex-col items-center rounded-sm bg-white pt-[19px]">
              <span className="flex h-[43px] w-[43px] items-center justify-center rounded-full bg-[#ebebeb] text-[#858b92]">
                <Line className="h-[23px] w-[23px]" width={1.300}>
                  {mark}
                </Line>
              </span>
              <span className="mt-1 whitespace-nowrap text-[11px] leading-4 text-[#20242a]">{name}</span>
            </button>
          ))}
        </div>
      </div>
    </Card>
  );
}

/* ---------- preview ---------- */

function Phone() {
  return (
    <div className="relative mt-[7px] h-[485px] w-full px-[2px]">
      <span className="absolute left-0 top-[93px] h-[19px] w-1 bg-[#83788e]" />
      <span className="absolute left-0 top-[128px] h-[35px] w-1 bg-[#83788e]" />
      <span className="absolute left-0 top-[175px] h-[35px] w-1 bg-[#83788e]" />
      <span className="absolute right-0 top-[153px] h-[54px] w-1 bg-[#83788e]" />
      <div className="relative h-full rounded-[38px] border border-[#5b5364] bg-[#c9c2cf] p-px">
        <div className="h-full rounded-[37px] border-2 border-[#453c50] bg-black p-2">
          <div className="flex h-full flex-col items-center justify-between rounded-[28px] bg-white pb-[8px] pt-[5px]">
            <div className="grid w-full grid-cols-3 items-center px-[14px] text-[9px] font-bold text-black">
              <span className="pl-1">9:41</span>
              <span className="flex h-[22px] w-[75px] items-center justify-end justify-self-center rounded-full bg-black pr-[8px]">
                <span className="h-[6px] w-[6px] rounded-full bg-[#0b1240]" />
              </span>
              <svg viewBox="0 0 34 8" className="h-2 w-[34px] justify-self-end" fill="#000">
                <rect x="0" y="5" width="1.500" height="2.500" />
                <rect x="2.500" y="4" width="1.500" height="3.500" />
                <rect x="5" y="2.500" width="1.500" height="5" />
                <rect x="7.500" y="1" width="1.500" height="6.500" />
                <path d="M12 3q4-3.500 8 0l-4 4.700z" />
                <rect x="23" y="1.200" width="10" height="6" rx="1.500" />
              </svg>
            </div>
            <span className="h-[3px] w-[93px] rounded-full bg-black" />
          </div>
        </div>
      </div>
    </div>
  );
}

/* ---------- bars ---------- */

function Step({ n, label, done, active }: { n: number; label: string; done?: boolean; active?: boolean }) {
  return (
    <li className="flex items-center">
      <span
        className={
          active
            ? "flex h-[23px] w-[23px] items-center justify-center rounded-full bg-[#29bd56] text-[13px] font-bold text-white"
            : "flex h-[23px] w-[23px] items-center justify-center rounded-full bg-[#757b84] text-[13px] font-bold text-white"
        }
      >
        {done ? (
          <Line className="h-4 w-4" width={3.200}>
            <path d="M4.500 12.500l5 5 10-11" />
          </Line>
        ) : (
          n
        )}
      </span>
      <span
        className={
          active
            ? "ml-[11px] whitespace-nowrap text-[13px] font-bold text-[#29bd56]"
            : "ml-[11px] whitespace-nowrap text-[13px] font-bold text-[#757b84]"
        }
      >
        {label}
      </span>
    </li>
  );
}

function Arrow({ stroke, head }: { stroke: string; head: string }) {
  return (
    <li className="pl-2 pr-3" aria-hidden="true">
      <svg viewBox="0 0 40 12" className="h-3 w-10">
        <path d="M0 6h33" stroke={stroke} strokeWidth="1.500" />
        <path d="M32 1.500L39.500 6 32 10.500z" fill={head} />
      </svg>
    </li>
  );
}

function TopBar() {
  return (
    <header className="absolute inset-x-0 top-[551px] flex h-[66px] items-center justify-between bg-white pl-[126px] pr-[112px] shadow-[0_1px_0_#dcdfe1,0_2px_8px_rgba(0,0,0,0.12)]">
      <a href="#" className="flex items-center gap-[7px] text-black">
        <svg viewBox="0 0 34 32" className="h-8 w-[33px]" aria-hidden="true">
          <defs>
            <linearGradient id="g" x1="0" y1="0" x2="0.600" y2="1">
              <stop offset="0" stopColor="#1fd07a" />
              <stop offset="1" stopColor="#1da887" />
            </linearGradient>
          </defs>
          <path
            fill="url(#g)"
            fillRule="evenodd"
            d="M4 0h7q4 0 4 4v7q0 4-4 4H4q-4 0-4-4V4q0-4 4-4zM5 3.500Q3.500 3.500 3.500 5v5Q3.500 11.500 5 11.500h5q1.500 0 1.500-1.500V5q0-1.500-1.500-1.500zM23 0h7q4 0 4 4v7q0 4-4 4h-7q-4 0-4-4V4q0-4 4-4zM24 3.500q-1.500 0-1.500 1.500v5q0 1.500 1.500 1.500h5q1.500 0 1.500-1.500V5q0-1.500-1.500-1.500zM4 17h7q4 0 4 4v7q0 4-4 4H4q-4 0-4-4v-7q0-4 4-4zM5 20.500q-1.500 0-1.500 1.500v5q0 1.500 1.500 1.500h5q1.500 0 1.500-1.500v-5q0-1.500-1.500-1.500zM5.500 5.500h4v4h-4zM24.500 5.500h4v4h-4zM15 14h4v4h-4zM20 18.500h7v7h-7zM22 20.500v3h3v-3zM30 18h3v3h-3zM27.500 26.500h5v5h-5zM19 28h3v3h-3z"
          />
        </svg>
        <span className="flex flex-col">
          <span className="text-[15px] font-light leading-[14px]">Online</span>
          <span className="flex gap-[2px] text-[19px] font-medium leading-[19px]">
            <span>QR</span>
            <span>Generator</span>
          </span>
        </span>
      </a>
      <ol className="mr-9 flex items-center">
        <Step n={1} label="QR-kode type" done active />
        <Arrow stroke="#29bd56" head="#29bd56" />
        <Step n={2} label="Indhold" active />
        <Arrow stroke="#1d1a2f" head="#757b84" />
        <Step n={3} label="QR design" />
      </ol>
      <div className="flex gap-[10px]">
        <button type="button" aria-label="Hjælp" className="flex h-[37px] w-[37px] items-center justify-center rounded border border-[#b9bcc0] text-[#757b84]">
          <svg viewBox="0 0 24 20" className="h-5 w-[23px]" fill="none" stroke="currentColor" strokeWidth="1.400" strokeLinejoin="round">
            <path d="M5 2h14q3.500 0 3.500 4v5q0 4-3.500 4h-6l-4 3v-3H5q-3.500 0-3.500-4V6Q1.500 2 5 2z" />
            <path d="M10 6.500q.2-1.700 2-1.700t2 1.700-2 2.200v1M12 11.300v.8" />
          </svg>
        </button>
        <button type="button" aria-label="Menu" className="flex h-[37px] w-[37px] flex-col items-center justify-center gap-[6px] rounded bg-[#29bd5b]">
          <span className="h-px w-[17px] bg-white" />
          <span className="h-px w-[17px] bg-white" />
          <span className="h-px w-[17px] bg-white" />
        </button>
      </div>
    </header>
  );
}

function BottomBar() {
  return (
    <div className="absolute inset-x-0 top-[1486px] flex h-[71px] items-start justify-between bg-white pl-[126px] pr-[112px] pt-3 shadow-[0_-2px_8px_rgba(0,0,0,0.08)]">
      <button type="button" className="flex h-[49px] w-[141px] items-center justify-center gap-2 rounded-sm border border-[#2ac155] text-[15px] font-bold text-[#2ac155]">
        <svg viewBox="0 0 20 14" className="h-[13px] w-[18px]" fill="none" stroke="currentColor" strokeWidth="1.500">
          <path d="M20 7H1.500M7.500 1l-6 6 6 6" />
        </svg>
        Tilbage
      </button>
      <button
        type="button"
        className="flex h-[49px] w-[142px] items-center justify-center gap-3 rounded-sm bg-gradient-to-br from-[#2ad15b] to-[#29bd50] text-[15px] font-bold text-white"
      >
        Næste
        <svg viewBox="0 0 20 14" className="h-[13px] w-[19px]" fill="none" stroke="currentColor" strokeWidth="2">
          <path d="M0 7h18.500M12.500 1l6 6-6 6" />
        </svg>
      </button>
    </div>
  );
}

export default function App() {
  return (
    <div className="relative bg-white pt-[67px] font-['Inter',sans-serif]">
      <main className="grid grid-cols-[minmax(0,1fr)_243px] gap-[136px] bg-[#f4f8fb] pb-[88px] pl-[126px] pr-[112px] pt-[19px]">
        <div>
          <h1 className="mb-5 text-[22px] font-medium leading-8 text-[#1a202c]">2. Tilføj indhold til din QR-kode</h1>
          <div className="flex flex-col gap-[15px]">
            <DesignCard />
            <CompanyCard />
            <HoursCard />
            <LocationCard />
            <ContactCard />
            <SocialCard />
            <AboutCard />
            <FacilitiesCard />
            <Card icon="type" title="Skrifttyper" sub="Gør din side unik med originale skrifttyper." closed />
            <Card icon="smile" title="Velkomstskærm" sub="Vis et billede, mens din side indlæses." closed />
            <Card icon="qr" title="Navn på QR-koden" sub="Navngiv din QR-kode." closed />
            <Card icon="lock" title="Adgangskode" help closed />
            <Card icon="folder" title="Mappe" sub="Link denne QR til en eksisterende eller en ny mappe." closed />
          </div>
        </div>
        <aside className="pt-[551px]">
          <div className="flex h-[35px] items-center rounded-full border-2 border-[#2ad15b] p-[2px] text-xs font-bold">
            <button type="button" className="h-full flex-[145] rounded-full bg-[#2ad15b] text-white">
              Forhåndsvisning
            </button>
            <button type="button" className="h-full flex-[92] text-[#2ac155]">
              QR-kode
            </button>
          </div>
          <Phone />
        </aside>
      </main>
      <TopBar />
      <BottomBar />
    </div>
  );
}
